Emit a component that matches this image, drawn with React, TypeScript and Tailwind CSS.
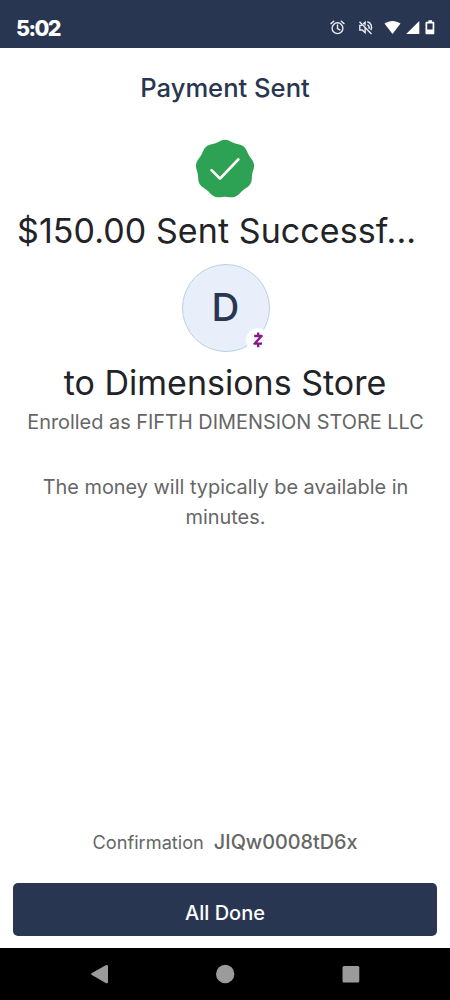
const SEAL_POINTS = Array.from({ length: 180 }, (_, i) => {
  const angle = (i * 2 * Math.PI) / 180;
  const radius = 28.5 + 0.85 * Math.cos(9 * angle);
  const x = 30 + radius * Math.sin(angle);
  const y = 30.2 - radius * Math.cos(angle);
  return `${x.toFixed(2)},${y.toFixed(2)}`;
}).join(" ");

const StatusBar = () => {
  return (
    <header className="h-12 shrink-0 bg-[#293651] flex items-center justify-between pl-4 pr-3 pt-2 text-white">
      <span className="pt-0.5 text-[21.5px] leading-none font-extrabold tracking-[-1.6px]">5:02</span>
      <svg width="108" height="20" viewBox="0 0 108 20" fill="none">
        {/* Alarm */}
        <g stroke="#e8ecf2" strokeWidth="1.4" strokeLinecap="round">
          <circle cx="7.5" cy="10.2" r="5.4" />
          <path d="M7.5 7v3.5l2.3 1.4M1 5.6l2.7-2.3M14 5.6l-2.7-2.3" />
        </g>
        {/* Muted speaker */}
        <g stroke="#e8ecf2" strokeWidth="1.4">
          <path d="M29.5 3.8l12 12.2" />
          <path d="M32.2 7.4h-2.4v4.6h2.4l2.9 2.7V9.4M33.2 5.9l1.9-1.7v3.4M37.4 6.9c1.5.7 2.1 2.3 1.6 4M37.3 3.8c3.8 1 5.3 4.9 3.5 8.3" />
        </g>
        {/* Wifi, signal and battery */}
        <path d="M54.5 5.5c4.8-3.5 11.2-3.5 16 0L62.5 16z" fill="#fff" />
        <path d="M89.3 3v13H76.2z" fill="#fff" />
        <path
          fillRule="evenodd"
          d="M98.4 2.2h3.7v1.5h1.2c.6 0 1 .4 1 1v10.6c0 .6-.4 1-1 1h-6.8c-.6 0-1-.4-1-1V4.7c0-.6.4-1 1-1h1.9zM97.2 5.5v6h5.4v-6z"
          fill="#fff"
        />
      </svg>
    </header>
  );
};

const SuccessSeal = () => {
  return (
    <svg width="60" height="60" viewBox="0 0 60 60" fill="none">
      <polygon points={SEAL_POINTS} fill="#2da154" />
      <path d="M16.5 31.1l8.5 8.5L43.3 20.5" stroke="#fff" strokeWidth="2.7" strokeLinecap="round" strokeLinejoin="round" />
    </svg>
  );
};

const Avatar = () => {
  return (
    <div className="relative size-[88px] rounded-full border border-[#b9d3e0] bg-[#e8effa] flex items-center justify-center">
      <span className="pb-0.5 text-[38.5px] leading-none font-medium text-[#293651]">D</span>
      <div className="absolute left-[63px] top-[63px] size-6 rounded-full bg-white flex items-center justify-center">
        <svg width="12" height="18" viewBox="0 0 12 18" fill="none" stroke="#86168a" strokeWidth="2.3">
          <path d="M2.2 5h7.4L2.5 12.7h7.5" strokeLinejoin="round" />
          <path d="M6.2 1.4V5M6.2 12.7v3.5" />
        </svg>
      </div>
    </div>
  );
};

const NavigationBar = () => {
  return (
    <nav className="h-[52px] shrink-0 bg-black">
      <svg width="450" height="52" viewBox="0 0 450 52" fill="#9b9b9b">
        <path d="M91.9 25.1l13.8-7.9c1.2-.7 2.3-.1 2.3 1.3v15.2c0 1.4-1.1 2-2.3 1.3l-13.8-7.9c-1-.6-1-1.4 0-2z" />
        <circle cx="225.2" cy="26" r="9.2" />
        <rect x="342.5" y="18" width="16.8" height="16.6" rx="1.5" />
      </svg>
    </nav>
  );
};

export default function App() {
  return (
    <div className="w-[450px] h-[1000px] flex flex-col overflow-hidden bg-white font-[Inter,sans-serif] text-center">
      <StatusBar />

      <main className="flex-1 flex flex-col items-center">
        <h1 className="mt-6 text-[25.6px] leading-8 font-[450] text-[#293651]">Payment Sent</h1>
        <div className="mt-[35px]">
          <SuccessSeal />
        </div>
        <h2 className="mt-3 w-full pl-[17px] text-left text-[34px] leading-10 tracking-[0.08px] text-[#212327] whitespace-nowrap">
          $150.00 Sent Successf...
        </h2>
        <div className="mt-[13px] pl-px">
          <Avatar />
        </div>
        <h2 className="mt-[11px] text-[34px] leading-10 text-[#212327] whitespace-nowrap">to Dimensions Store</h2>
        <p className="mt-1 pl-px text-[19.9px] leading-[30px] text-[#666666] whitespace-nowrap">
          Enrolled as FIFTH DIMENSION STORE LLC
        </p>
        <p className="mt-[35px] pl-px text-[19.9px] leading-[30px] text-[#666666]">
          The money will typically be available in
          <br />
          minutes.
        </p>

        <div className="mt-auto flex items-baseline gap-2.5 leading-7 text-[#666666]">
          <span className="text-[18.2px]">Confirmation</span>
          <span className="text-[19.8px] font-[450]">JIQw0008tD6x</span>
        </div>
        <button className="mt-[27px] mb-3 h-[53px] w-[424px] rounded-[5px] bg-[#293651] pt-1.5 text-[20px] font-medium text-white">
          All Done
        </button>
      </main>

      <NavigationBar />
    </div>
  );
}
